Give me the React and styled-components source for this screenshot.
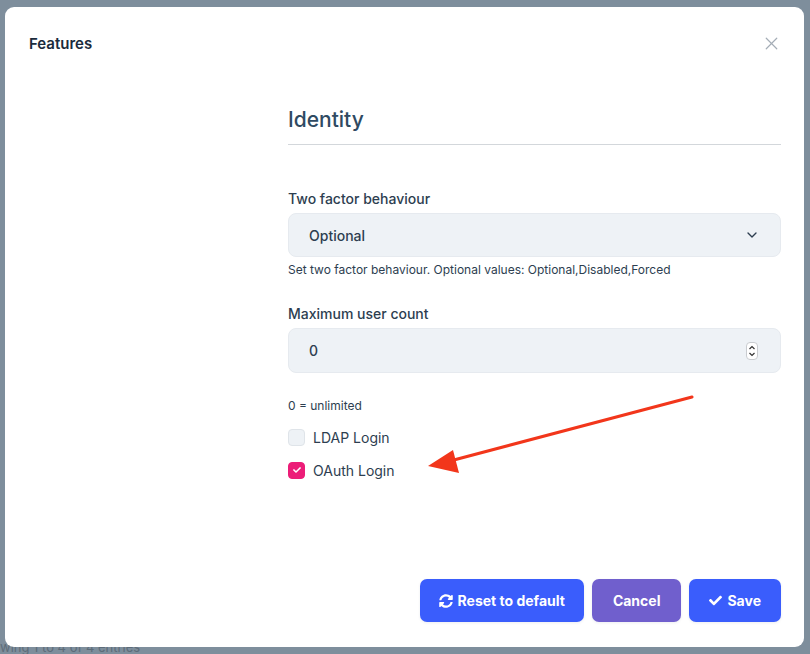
import React from 'react';
import styled, { createGlobalStyle } from 'styled-components';
import { X, ChevronDown } from 'lucide-react';
import { FaSyncAlt, FaCheck } from 'react-icons/fa';

const GlobalStyle = createGlobalStyle`
    * { box-sizing: border-box; }
    html, body { margin: 0; padding: 0; }
    body {
        font-family: Inter, "Noto Sans", "Liberation Sans", sans-serif;
        background: #7e8e9c;
    }
`;

const Page = styled.div`
    position: relative;
    width: 810px;
    height: 654px;
    padding: 7px 6px 7px 5px;
    overflow: hidden;
    background: #7e8e9c;
`;

const BehindText = styled.div`
    position: absolute;
    left: 0;
    bottom: 0;
    font-size: 13px;
    line-height: 14px;
    color: #5d6c79;
    white-space: nowrap;
`;

const Modal = styled.div`
    position: relative;
    height: 100%;
    background: #fff;
    border-radius: 9px;
    display: flex;
    flex-direction: column;
`;

const Header = styled.div`
    display: flex;
    justify-content: space-between;
    align-items: center;
    padding: 26px 22px 26px 24px;
`;

const Title = styled.h5`
    margin: 0;
    font-size: 15px;
    line-height: 20px;
    font-weight: 600;
    color: #1a2b3c;
`;

const Close = styled.button`
    border: 0;
    background: none;
    padding: 0;
    display: flex;
    color: #a4adb6;
    cursor: pointer;
`;

const Body = styled.div`
    display: grid;
    grid-template-columns: 259px 1fr;
    padding: 26px 23px 0 24px;
`;

const Section = styled.div`
    grid-column: 2;
    display: flex;
    flex-direction: column;
    color: #2d3e50;
`;

const Heading = styled.h3`
    margin: 0;
    font-size: 21px;
    line-height: 28px;
    font-weight: 500;
    color: #2f4a62;
    padding-bottom: 10px;
    border-bottom: 1px solid #d3d7db;
`;

const Label = styled.label`
    font-size: 14px;
    line-height: 20px;
    font-weight: 500;
    margin-top: ${p => p.$top}px;
    margin-bottom: 4px;
`;

const Field = styled.div`
    height: ${p => p.$h}px;
    background: #eef2f6;
    border: 1px solid #e6eaef;
    border-radius: 8px;
    display: flex;
    align-items: center;
    justify-content: space-between;
    padding: 0 20px 0 20px;
    font-size: 14px;
    font-weight: 500;
    color: #2d3e50;
`;

const Spinner = styled.span`
    width: 12px;
    height: 18px;
    margin-right: 2px;
    border: 1px solid #c9ccd0;
    border-radius: 4px;
    background: #fff;
    display: flex;
`;

const Help = styled.div`
    font-size: 12px;
    line-height: 16px;
    margin-top: ${p => p.$top}px;
`;

const Check = styled.div`
    display: flex;
    align-items: center;
    gap: 8px;
    height: 20px;
    margin-top: ${p => p.$top}px;
    font-size: 14px;
    color: #2d3e50;
`;

const Box = styled.span`
    width: 17px;
    height: 17px;
    border-radius: 4px;
    display: flex;
    align-items: center;
    justify-content: center;
    background: ${p => (p.$on ? '#ec1d78' : '#eef2f6')};
    border: 1px solid ${p => (p.$on ? '#ec1d78' : '#dfe4e9')};
    color: #fff;
`;

const Footer = styled.div`
    margin-top: auto;
    display: flex;
    justify-content: flex-end;
    gap: 8px;
    padding: 0 23px 25px 0;
`;

const Button = styled.button`
    height: 43px;
    border: 0;
    border-radius: 7px;
    padding: 0 ${p => p.$px}px;
    background: ${p => p.$bg};
    color: #fff;
    font-family: inherit;
    font-size: 14px;
    font-weight: 700;
    display: flex;
    align-items: center;
    gap: 5px;
    box-shadow: 0 1px 3px rgba(30, 40, 80, 0.08);
    cursor: pointer;
`;

const Annotation = styled.svg`
    position: absolute;
    inset: 0;
    width: 100%;
    height: 100%;
    pointer-events: none;
`;

export default function App() {
    return (
        <Page>
            <GlobalStyle />
            <BehindText>wing 1 to 4 of 4 entries</BehindText>
            <Modal>
                <Header>
                    <Title>Features</Title>
                    <Close aria-label='close'>
                        <X size={21} strokeWidth={1.4} />
                    </Close>
                </Header>
                <Body>
                    <Section>
                        <Heading>Identity</Heading>
                        <Label $top={44}>Two factor behaviour</Label>
                        <Field $h={44}>
                            <span>Optional</span>
                            <ChevronDown size={16} strokeWidth={2} color='#2d3e50' />
                        </Field>
                        <Help $top={5}>Set two factor behaviour. Optional values: Optional,Disabled,Forced</Help>
                        <Label $top={26}>Maximum user count</Label>
                        <Field $h={45}>
                            <span>0</span>
                            <Spinner>
                                <svg width='10' height='16' viewBox='0 0 10 16' fill='none' stroke='#333' strokeWidth='1.2'>
                                    <path d='M2.5 6 L5 3.5 L7.5 6' />
                                    <path d='M2.5 10 L5 12.5 L7.5 10' />
                                </svg>
                            </Spinner>
                        </Field>
                        <Help $top={25}>0 = unlimited</Help>
                        <Check $top={13}>
                            <Box />
                            LDAP Login
                        </Check>
                        <Check $top={13}>
                            <Box $on>
                                <FaCheck size={8} />
                            </Box>
                            OAuth Login
                        </Check>
                    </Section>
                </Body>
                <Footer>
                    <Button $bg='#3a5dfc' $px={19}>
                        <FaSyncAlt size={14} />
                        Reset to default
                    </Button>
                    <Button $bg='#705fcd' $px={21}>Cancel</Button>
                    <Button $bg='#3a5dfc' $px={20}>
                        <FaCheck size={13} />
                        Save
                    </Button>
                </Footer>
                <Annotation viewBox='0 0 799 640'>
                    <line x1='687' y1='390' x2='445' y2='454' stroke='#f2361b' strokeWidth='3' strokeLinecap='round' />
                    <polygon points='423,459 448,443 454,466' fill='#f2361b' />
                </Annotation>
            </Modal>
        </Page>
    );
}
